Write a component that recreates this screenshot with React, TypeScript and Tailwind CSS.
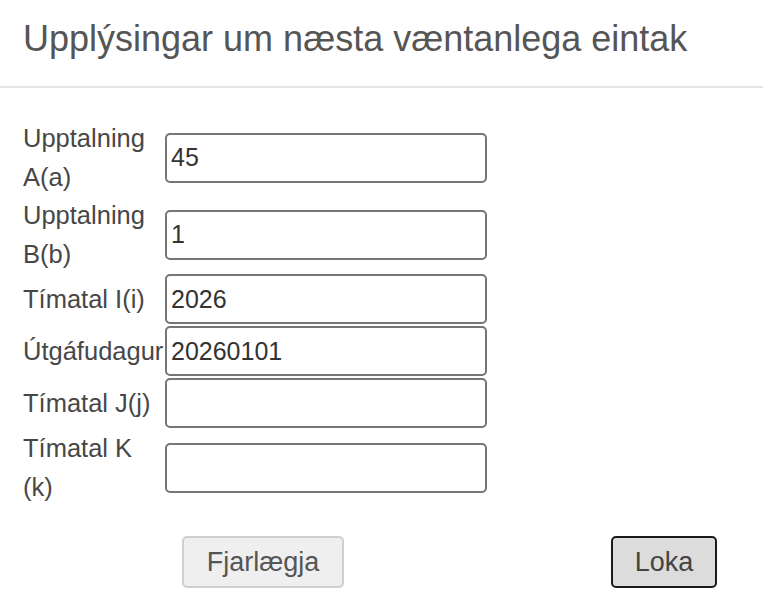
import React from "react";

const rows: { label: string; value: string; tall: boolean }[] = [
  { label: "Upptalning A(a)", value: "45", tall: true },
  { label: "Upptalning B(b)", value: "1", tall: true },
  { label: "Tímatal I(i)", value: "2026", tall: false },
  { label: "Útgáfudagur", value: "20260101", tall: false },
  { label: "Tímatal J(j)", value: "", tall: false },
  { label: "Tímatal K (k)", value: "", tall: true },
];

export default function App() {
  return (
    <div
      className="w-[763px] h-[607px] bg-white overflow-hidden"
      style={{ fontFamily: '"Liberation Sans", Arial, sans-serif' }}
    >
      <div className="pt-[19px] pb-[27px] px-[23px] border-b-2 border-[#e5e5e5]">
        <h1 className="text-[36px] leading-[40px] text-[#555555] font-normal m-0">
          Upplýsingar um næsta væntanlega eintak
        </h1>
      </div>
      <div className="pt-[31px] pl-[23px] pr-[23px]">
        {rows.map((r, i) => (
          <div
            key={i}
            className={`flex items-center ${r.tall ? "h-[77px]" : "h-[52px]"}`}
          >
            <div className="w-[142px] shrink-0 text-[25.5px] leading-[38.5px] text-[#474747] whitespace-normal">
              {r.label}
            </div>
            <input
              readOnly
              value={r.value}
              className="w-[322px] h-[50px] shrink-0 bg-white border-2 border-[#767676] rounded-[5px] px-[4px] text-[25px] text-[#333333] outline-none"
              style={{ fontFamily: '"Liberation Sans", Arial, sans-serif' }}
            />
          </div>
        ))}
        <div className="flex justify-between ml-[159px] w-[535px] mt-[30px]">
          <button className="w-[162px] h-[52px] bg-[#efefef] border-2 border-[#cfcfcf] rounded-[5px] text-[27px] text-[#555555]">
            Fjarlægja
          </button>
          <button className="w-[106px] h-[52px] bg-[#dcdcdc] border-2 border-[#1a1a1a] rounded-[5px] text-[27px] text-[#444444]">
            Loka
          </button>
        </div>
      </div>
    </div>
  );
}
